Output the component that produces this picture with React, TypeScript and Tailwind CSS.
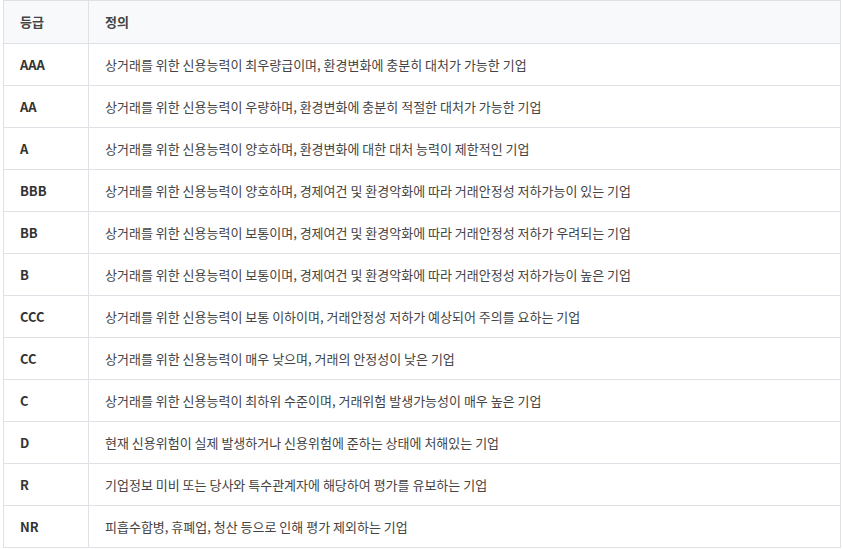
const rows: [string, string][] = [
  ["AAA", "상거래를 위한 신용능력이 최우량급이며, 환경변화에 충분히 대처가 가능한 기업"],
  ["AA", "상거래를 위한 신용능력이 우량하며, 환경변화에 충분히 적절한 대처가 가능한 기업"],
  ["A", "상거래를 위한 신용능력이 양호하며, 환경변화에 대한 대처 능력이 제한적인 기업"],
  ["BBB", "상거래를 위한 신용능력이 양호하며, 경제여건 및 환경악화에 따라 거래안정성 저하가능이 있는 기업"],
  ["BB", "상거래를 위한 신용능력이 보통이며, 경제여건 및 환경악화에 따라 거래안정성 저하가 우려되는 기업"],
  ["B", "상거래를 위한 신용능력이 보통이며, 경제여건 및 환경악화에 따라 거래안정성 저하가능이 높은 기업"],
  ["CCC", "상거래를 위한 신용능력이 보통 이하이며, 거래안정성 저하가 예상되어 주의를 요하는 기업"],
  ["CC", "상거래를 위한 신용능력이 매우 낮으며, 거래의 안정성이 낮은 기업"],
  ["C", "상거래를 위한 신용능력이 최하위 수준이며, 거래위험 발생가능성이 매우 높은 기업"],
  ["D", "현재 신용위험이 실제 발생하거나 신용위험에 준하는 상태에 처해있는 기업"],
  ["R", "기업정보 미비 또는 당사와 특수관계자에 해당하여 평가를 유보하는 기업"],
  ["NR", "피흡수합병, 휴폐업, 청산 등으로 인해 평가 제외하는 기업"],
];

export default function App() {
  return (
    <div className="bg-white w-[843px] h-[549px] pl-[3px] pr-[2px]" style={{ fontFamily: '"Noto Sans CJK KR", "Noto Sans", sans-serif' }}>
      <table className="w-[838px] border-collapse text-[13px]">
        <thead>
          <tr className="h-[43px] bg-[#f8f9fa]">
            <th className="border border-[#dee2e6] w-[85px] text-left pl-4 font-semibold text-[#444]">등급</th>
            <th className="border border-[#dee2e6] text-left pl-4 font-semibold text-[#444]">정의</th>
          </tr>
        </thead>
        <tbody>
          {rows.map(([g, d]) => (
            <tr key={g} className="h-[42px]">
              <td className="border border-[#dee2e6] pl-4 font-bold text-[#333]">{g}</td>
              <td className="border border-[#dee2e6] pl-4 text-[#444]">{d}</td>
            </tr>
          ))}
        </tbody>
      </table>
    </div>
  );
}
